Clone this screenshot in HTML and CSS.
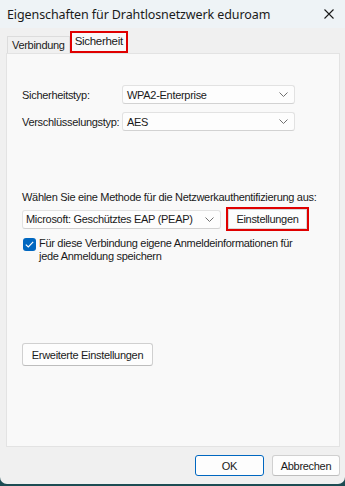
FILE: index.html
```html
<!DOCTYPE html>
<html lang="de">
<head>
<meta charset="utf-8">
<link rel="stylesheet" href="styles.css">
</head>
<body>
<div class="window">
  <div class="titlebar">
    <span class="title">Eigenschaften für Drahtlosnetzwerk eduroam</span>
    <svg class="close" width="10" height="10" viewBox="0 0 10 10"><path d="M0.5 0.5 L9.5 9.5 M9.5 0.5 L0.5 9.5" stroke="#1a1a1a" stroke-width="1.1" fill="none"/></svg>
  </div>
  <div class="body">
    <div class="tabs">
      <div class="tab">Verbindung</div>
      <div class="tab active">Sicherheit</div>
    </div>
    <div class="panel">
      <div class="row row-first">
        <span class="label">Sicherheitstyp:</span>
        <div class="select wide"><span>WPA2-Enterprise</span><svg class="chev" width="9" height="5" viewBox="0 0 9 5"><path d="M0.5 0.5 L4.5 4.5 L8.5 0.5" stroke="#707070" fill="none"/></svg></div>
      </div>
      <div class="row">
        <span class="label">Verschlüsselungstyp:</span>
        <div class="select wide"><span>AES</span><svg class="chev" width="9" height="5" viewBox="0 0 9 5"><path d="M0.5 0.5 L4.5 4.5 L8.5 0.5" stroke="#707070" fill="none"/></svg></div>
      </div>
      <div class="method-label">Wählen Sie eine Methode für die Netzwerkauthentifizierung aus:</div>
      <div class="method-row">
        <div class="select method"><span>Microsoft: Geschütztes EAP (PEAP)</span><svg class="chev" width="9" height="5" viewBox="0 0 9 5"><path d="M0.5 0.5 L4.5 4.5 L8.5 0.5" stroke="#707070" fill="none"/></svg></div>
        <div class="btn highlight">Einstellungen</div>
      </div>
      <div class="check-row">
        <span class="checkbox"><svg width="9" height="7" viewBox="0 0 9 7"><path d="M0.8 3.6 L3.3 6 L8.2 0.9" stroke="#fff" stroke-width="1.2" fill="none"/></svg></span>
        <span class="check-text">Für diese Verbindung eigene Anmeldeinformationen für jede Anmeldung speichern</span>
      </div>
      <div class="btn advanced">Erweiterte Einstellungen</div>
    </div>
    <div class="footer">
      <div class="btn ok">OK</div>
      <div class="btn cancel">Abbrechen</div>
    </div>
  </div>
</div>
</body>
</html>
```
FILE: styles.css
```css
html, body {
  margin: 0;
  padding: 0;
}
body {
  width: 345px;
  height: 486px;
  background: #1c4c53;
  font-family: "Liberation Sans", Arial, sans-serif;
  font-size: 11px;
  letter-spacing: -0.3px;
  color: #1a1a1a;
  overflow: hidden;
}
.window {
  width: 345px;
  height: 484px;
  background: #f0f0f0;
  border-radius: 0 0 7px 7px;
  display: flex;
  flex-direction: column;
  overflow: hidden;
}
.titlebar {
  height: 28px;
  background: #eef3f6;
  display: flex;
  align-items: center;
  justify-content: space-between;
  padding: 0 11px 0 7px;
  flex: none;
}
.title {
  font-family: "Noto Sans", sans-serif;
  font-size: 12.5px;
  letter-spacing: -0.1px;
  color: #1a1a1a;
  white-space: nowrap;
}
.close {
  display: block;
}
.body {
  flex: 1;
  display: flex;
  flex-direction: column;
  padding: 0 5px 0 6px;
}
.tabs {
  display: flex;
  align-items: flex-end;
  height: 25px;
  padding-left: 1px;
}
.tab {
  height: 16px;
  line-height: 16px;
  padding: 0 4px;
  border: 1px solid #dcdcdc;
  border-bottom: none;
  background: #f0f0f0;
  white-space: nowrap;
}
.tab.active {
  height: 18px;
  line-height: 17px;
  padding: 0 3px;
  font-size: 11.5px;
  background: #f9f9f9;
  border: 2px solid #e00000;
}
.panel {
  flex: none;
  height: 394px;
  box-sizing: border-box;
  background: #f9f9f9;
  border: 1px solid #e3e3e3;
  padding: 31px 0 0 15px;
  display: flex;
  flex-direction: column;
  align-items: flex-start;
}
.row {
  display: flex;
  align-items: center;
  margin-bottom: 8px;
  white-space: nowrap;
}
.label {
  width: 100px;
}
.select {
  box-sizing: border-box;
  height: 19px;
  background: #fdfdfd;
  border: 1px solid #e2e2e2;
  border-bottom-color: #d2d2d2;
  border-radius: 3px;
  display: flex;
  align-items: center;
  justify-content: space-between;
  padding: 0 6px 0 4px;
  white-space: nowrap;
}
.select.wide {
  width: 173px;
}
.chev {
  display: block;
}
.method-label {
  margin-top: 51px;
  line-height: 15px;
  white-space: nowrap;
}
.method-row {
  display: flex;
  align-items: center;
  margin-top: 2px;
}
.select.method {
  width: 199px;
  padding-left: 3px;
}
.btn {
  box-sizing: border-box;
  background: #fdfdfd;
  border: 1px solid #d0d0d0;
  border-bottom-color: #bdbdbd;
  border-radius: 3px;
  display: flex;
  align-items: center;
  justify-content: center;
  height: 21px;
  white-space: nowrap;
}
.btn.highlight {
  margin-left: 5px;
  width: 83px;
  height: 24px;
  border: 2px solid #e00000;
  border-radius: 0;
  box-shadow: inset 0 0 0 1px #d6d6d6;
}
.check-row {
  display: flex;
  align-items: flex-start;
  margin-top: 6px;
  margin-left: 1px;
}
.checkbox {
  width: 13px;
  height: 13px;
  border-radius: 3px;
  background: #0067c0;
  display: flex;
  align-items: center;
  justify-content: center;
  flex: none;
  margin-top: 1px;
}
.check-text {
  margin-left: 3px;
  width: 255px;
  line-height: 13px;
}
.btn.advanced {
  margin-top: 80px;
  width: 131px;
  height: 23px;
}
.footer {
  display: flex;
  justify-content: flex-end;
  gap: 8px;
  padding-top: 8px;
}
.btn.ok {
  width: 69px;
  border: 1px solid #0067c0;
}
.btn.cancel {
  width: 68px;
}
```
